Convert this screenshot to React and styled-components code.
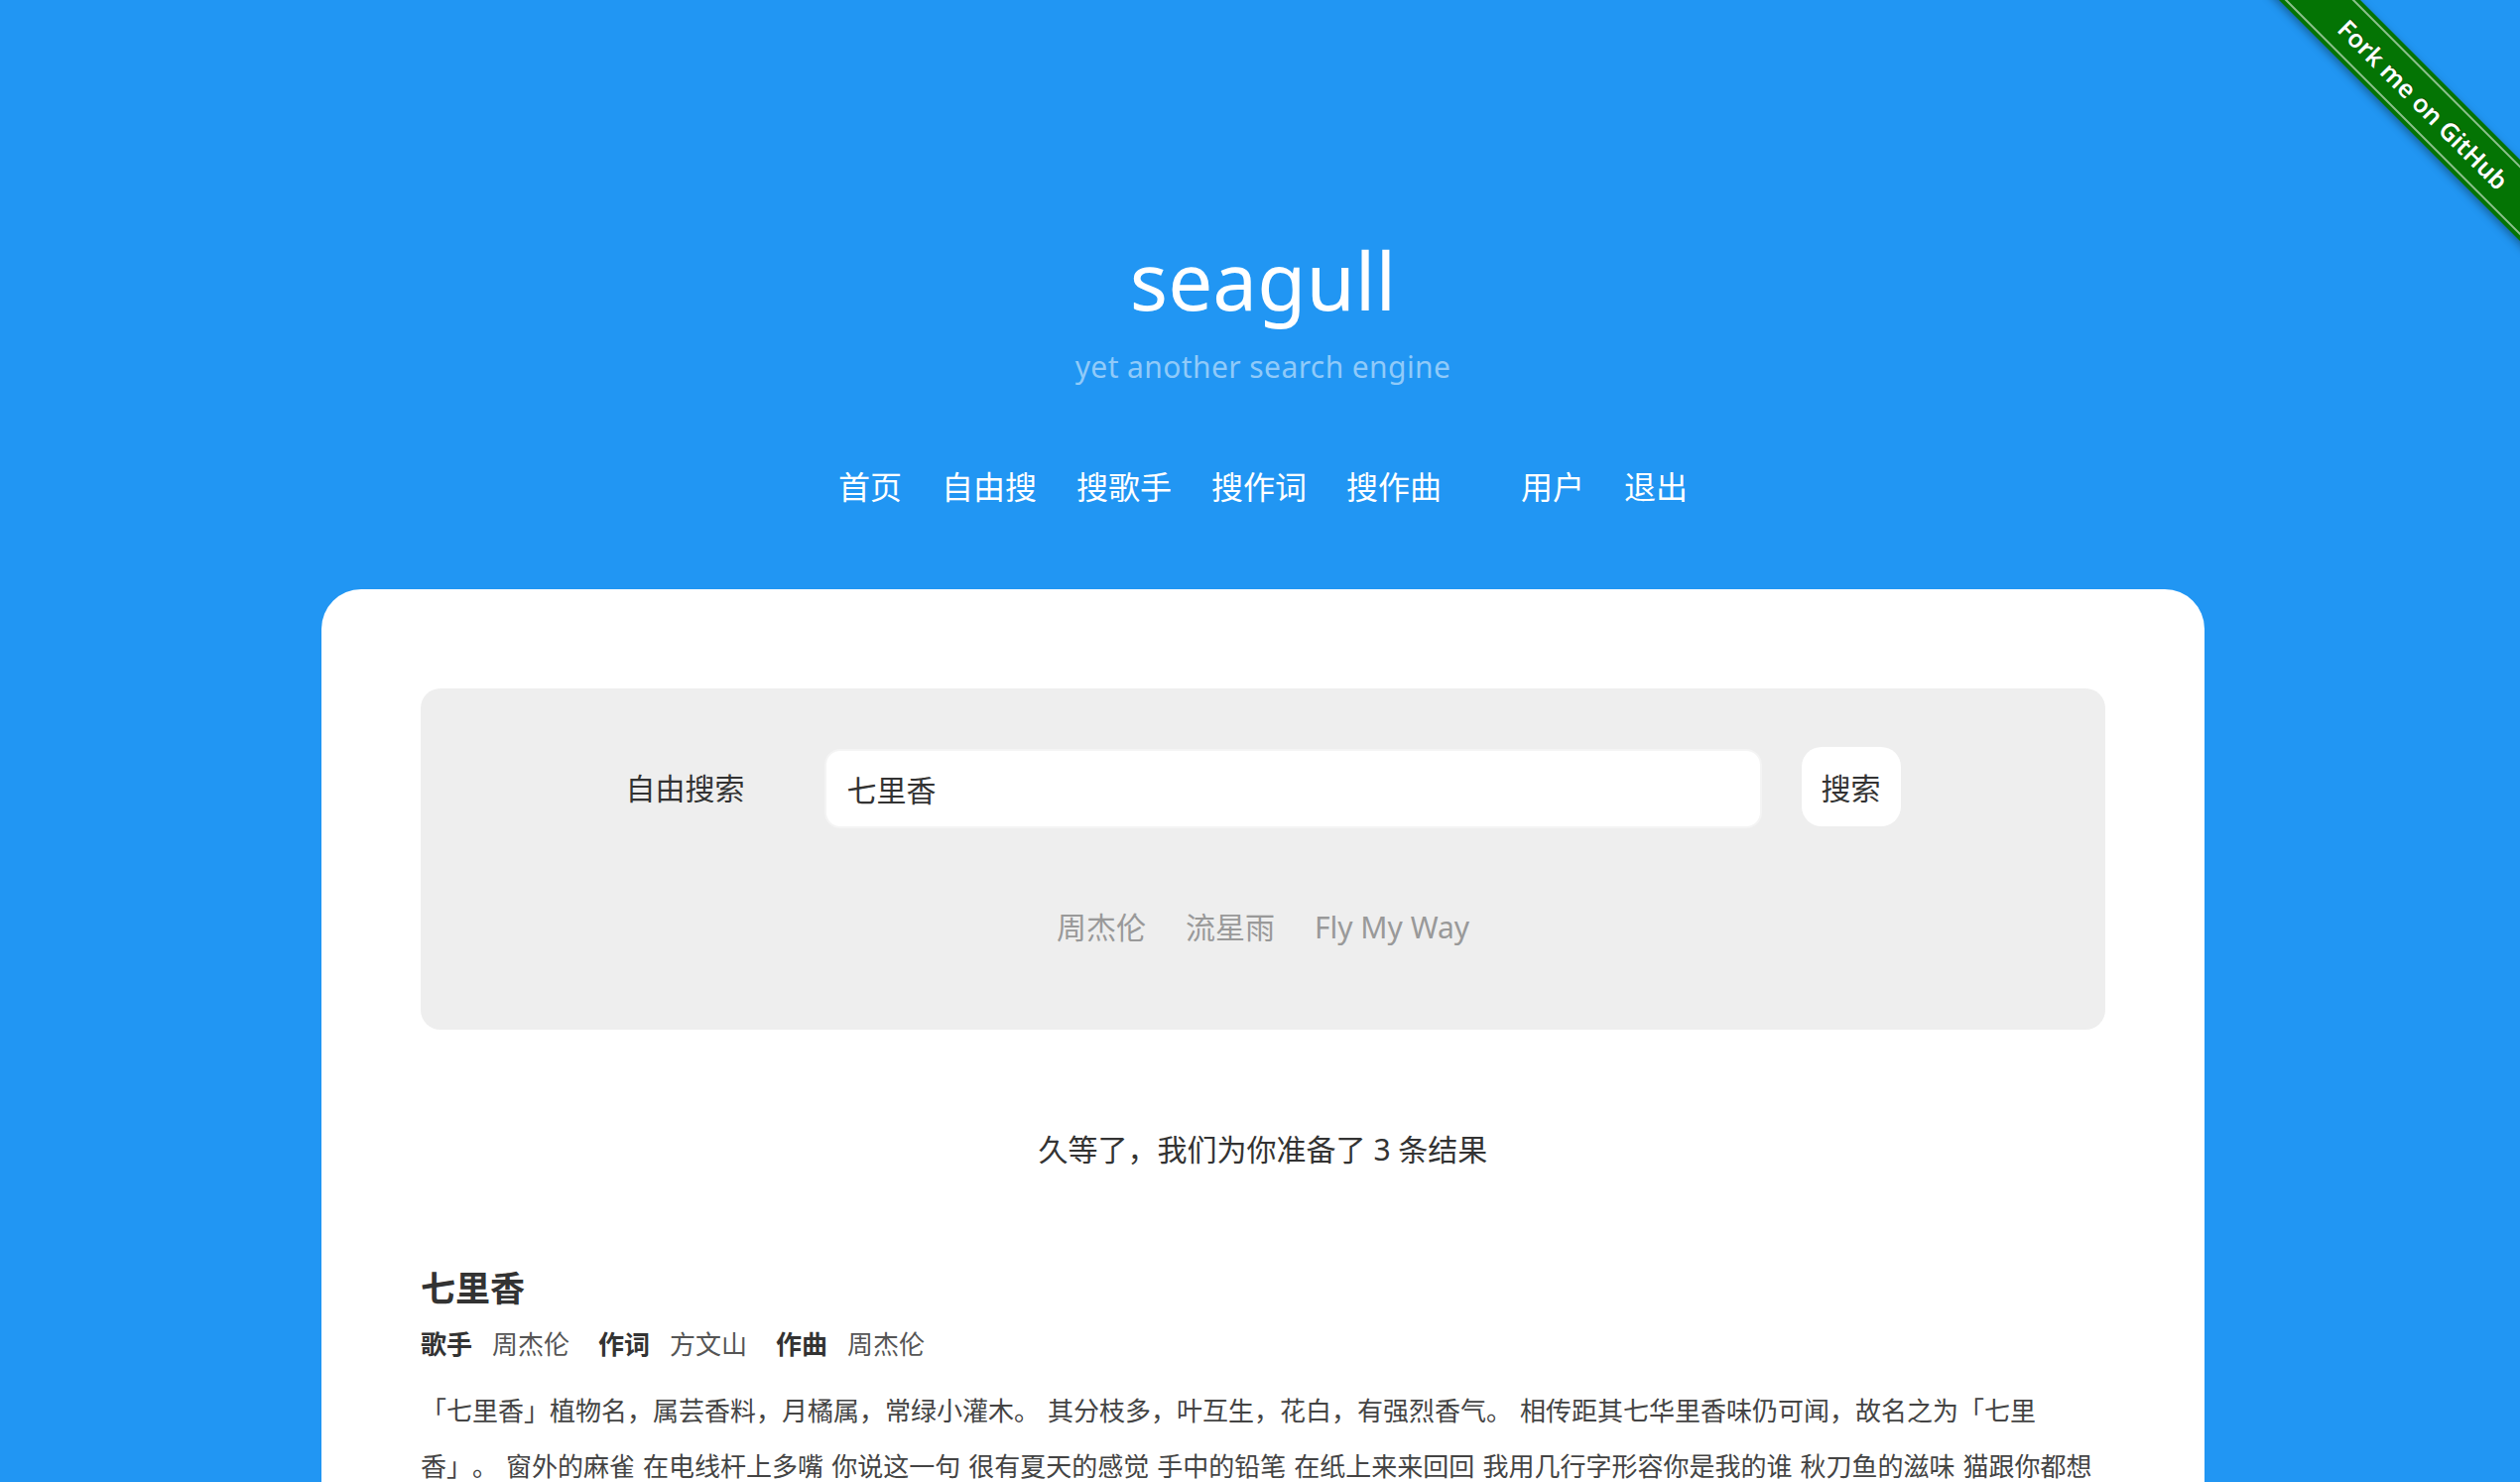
import React from "react";
import styled, { createGlobalStyle } from "styled-components";

const GlobalStyle = createGlobalStyle`
  html, body {
    margin: 0;
    padding: 0;
    background: #2196f3;
  }
  body {
    font-family: "Noto Sans", "Noto Sans CJK SC", sans-serif;
    color: #333;
  }
  * { box-sizing: border-box; }
`;

const Page = styled.div`
  position: relative;
  min-height: 1494px;
  padding-left: 6px;
  padding-bottom: 200px;
  display: flex;
  flex-direction: column;
  align-items: center;
`;

const Header = styled.header`
  padding-top: 232px;
  display: flex;
  flex-direction: column;
  align-items: center;
`;

const Logo = styled.h1`
  margin: 0;
  font-size: 80px;
  line-height: 100px;
  font-weight: 400;
  color: #fff;
`;

const Tagline = styled.p`
  margin: 18px 0 0;
  font-size: 30px;
  line-height: 40px;
  letter-spacing: 0.4px;
  color: #90caf9;
`;

const Nav = styled.nav`
  margin-top: 79px;
  display: flex;
  gap: 40px;
`;

const NavLink = styled.a`
  font-size: 32px;
  line-height: 44px;
  color: #fff;
  text-decoration: none;
  ${(p) => (p.$spaced ? "margin-left: 40px;" : "")}
`;

const Card = styled.main`
  margin-top: 81px;
  width: 1898px;
  background: #fff;
  border-radius: 40px;
  padding: 100px;
`;

const SearchPanel = styled.section`
  background: #eeeeee;
  border-radius: 20px;
  padding: 61px 0 83px;
  display: flex;
  flex-direction: column;
  align-items: center;
`;

const SearchRow = styled.form`
  display: flex;
  align-items: center;
`;

const SearchLabel = styled.label`
  font-size: 30px;
  line-height: 40px;
  color: #333;
  margin-right: 80px;
`;

const SearchInput = styled.input`
  width: 945px;
  height: 80px;
  border: 2px solid #f4f4f4;
  border-radius: 16px;
  background: #fff;
  padding: 0 21px;
  font-family: "Noto Sans", "Noto Sans CJK SC", sans-serif;
  font-size: 30px;
  color: #333;
  outline: none;
`;

const SearchButton = styled.button`
  margin-left: 40px;
  margin-top: -4px;
  width: 100px;
  height: 80px;
  border: none;
  border-radius: 20px;
  background: #fff;
  font-family: "Noto Sans", "Noto Sans CJK SC", sans-serif;
  font-size: 30px;
  color: #333;
  padding: 0;
  cursor: pointer;
`;

const Suggestions = styled.div`
  margin-top: 80px;
  display: flex;
  gap: 40px;
`;

const Suggestion = styled.a`
  font-size: 30px;
  line-height: 40px;
  color: #999;
  text-decoration: none;
`;

const ResultCount = styled.p`
  margin: 101px 0 0;
  text-align: center;
  font-size: 30px;
  line-height: 40px;
  color: #333;
`;

const Result = styled.article`
  margin-top: 98px;
`;

const ResultTitle = styled.h2`
  margin: 0;
  font-size: 35px;
  line-height: 44px;
  font-weight: 700;
  color: #333;
`;

const Meta = styled.div`
  margin-top: 16px;
  display: flex;
  gap: 29px;
  font-size: 26px;
  line-height: 36px;
`;

const MetaItem = styled.span`
  display: flex;
  gap: 20px;
`;

const MetaLabel = styled.b`
  font-weight: 700;
  color: #333;
`;

const MetaValue = styled.span`
  color: #555;
`;

const Lyrics = styled.p`
  margin: 21px 0 0;
  font-size: 26px;
  line-height: 56px;
  word-spacing: 1.3px;
  text-spacing-trim: space-all;
  color: #444;
`;

const RibbonWrap = styled.div`
  position: absolute;
  top: 0;
  right: 0;
  width: 260px;
  height: 260px;
  overflow: hidden;
  z-index: 10;
`;

const RibbonBand = styled.a`
  position: absolute;
  left: -40px;
  top: 73px;
  width: 400px;
  height: 58px;
  transform: rotate(45deg);
  background: #047404;
  box-shadow: 0 3px 8px rgba(0, 0, 0, 0.35);
  display: flex;
  align-items: center;
  justify-content: center;
  padding-left: 8px;
  color: #fff;
  font-family: "Noto Sans", sans-serif;
  font-size: 25px;
  font-weight: 600;
  text-decoration: none;
  text-shadow: 0 -1px 0 rgba(0, 0, 0, 0.4);
  &::before,
  &::after {
    content: "";
    position: absolute;
    left: 0;
    right: 0;
    border-top: 2px solid rgba(255, 255, 255, 0.55);
  }
  &::before { top: 4px; }
  &::after { bottom: 4px; }
`;

const navItems = ["首页", "自由搜", "搜歌手", "搜作词", "搜作曲"];
const userItems = ["用户", "退出"];
const suggestions = ["周杰伦", "流星雨", "Fly My Way"];

const lyrics =
  "「七里香」植物名，属芸香料，月橘属，常绿小灌木。 其分枝多，叶互生，花白，有强烈香气。 相传距其七华里香味仍可闻，故名之为「七里香」。 窗外的麻雀 在电线杆上多嘴 你说这一句 很有夏天的感觉 手中的铅笔 在纸上来来回回 我用几行字形容你是我的谁 秋刀鱼的滋味 猫跟你都想了解 初恋的香味就这样被我们寻回 那温暖的阳光 像刚摘的鲜艳草莓 你说你舍不得吃掉这一种感觉";

export default function App() {
  return (
    <>
      <GlobalStyle />
      <Page>
        <RibbonWrap>
          <RibbonBand href="#">Fork me on GitHub</RibbonBand>
        </RibbonWrap>
        <Header>
          <Logo>seagull</Logo>
          <Tagline>yet another search engine</Tagline>
          <Nav>
            {navItems.map((t) => (
              <NavLink key={t} href="#">{t}</NavLink>
            ))}
            {userItems.map((t, i) => (
              <NavLink key={t} href="#" $spaced={i === 0}>{t}</NavLink>
            ))}
          </Nav>
        </Header>
        <Card>
          <SearchPanel>
            <SearchRow onSubmit={(e) => e.preventDefault()}>
              <SearchLabel>自由搜索</SearchLabel>
              <SearchInput defaultValue="七里香" />
              <SearchButton type="submit">搜索</SearchButton>
            </SearchRow>
            <Suggestions>
              {suggestions.map((s) => (
                <Suggestion key={s} href="#">{s}</Suggestion>
              ))}
            </Suggestions>
          </SearchPanel>
          <ResultCount>久等了，我们为你准备了 3 条结果</ResultCount>
          <Result>
            <ResultTitle>七里香</ResultTitle>
            <Meta>
              <MetaItem><MetaLabel>歌手</MetaLabel><MetaValue>周杰伦</MetaValue></MetaItem>
              <MetaItem><MetaLabel>作词</MetaLabel><MetaValue>方文山</MetaValue></MetaItem>
              <MetaItem><MetaLabel>作曲</MetaLabel><MetaValue>周杰伦</MetaValue></MetaItem>
            </Meta>
            <Lyrics>{lyrics}</Lyrics>
          </Result>
        </Card>
      </Page>
    </>
  );
}
